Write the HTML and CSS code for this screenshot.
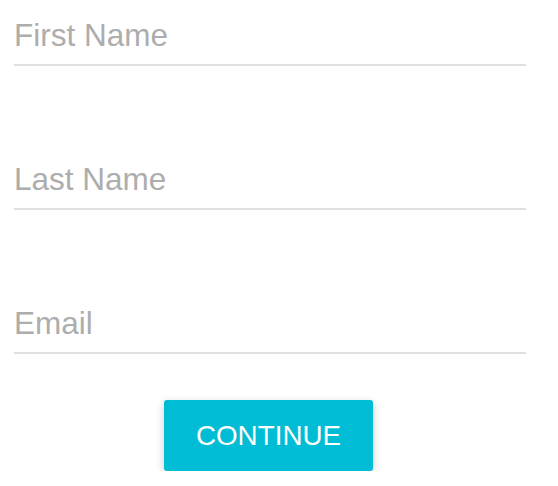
FILE: index.html
```html
<!DOCTYPE html>
<html>
<head>
<meta charset="utf-8">
<link rel="stylesheet" href="styles.css">
</head>
<body>
<form class="form">
  <input class="field" type="text" placeholder="First Name">
  <input class="field" type="text" placeholder="Last Name">
  <input class="field" type="email" placeholder="Email">
  <div class="actions">
    <button class="btn" type="button">CONTINUE</button>
  </div>
</form>
</body>
</html>
```
FILE: styles.css
```css
html, body {
  margin: 0;
  padding: 0;
  background: #ffffff;
}
.form {
  width: 512px;
  margin-left: 14px;
  display: flex;
  flex-direction: column;
  font-family: "Liberation Sans", Arial, sans-serif;
}
.field {
  display: block;
  box-sizing: border-box;
  width: 100%;
  height: 66px;
  margin: 0;
  padding: 17px 0 10px 0;
  border: none;
  border-bottom: 2px solid #e0e0e0;
  outline: none;
  background: transparent;
  font-family: "Liberation Sans", Arial, sans-serif;
  font-size: 31.5px;
  line-height: 37px;
  color: #333;
}
.field + .field {
  margin-top: 78px;
}
.field::placeholder {
  color: #adadad;
  opacity: 1;
}
.actions {
  display: flex;
  justify-content: center;
  margin-top: 46px;
  padding-right: 3px;
}
.btn {
  width: 209px;
  height: 71px;
  border: none;
  border-radius: 3px;
  background: #00bcd4;
  color: #ffffff;
  font-family: "Liberation Sans", Arial, sans-serif;
  font-size: 27.8px;
  box-shadow: 0 3px 10px rgba(0, 0, 0, 0.2);
  padding: 0;
  cursor: pointer;
}
```
